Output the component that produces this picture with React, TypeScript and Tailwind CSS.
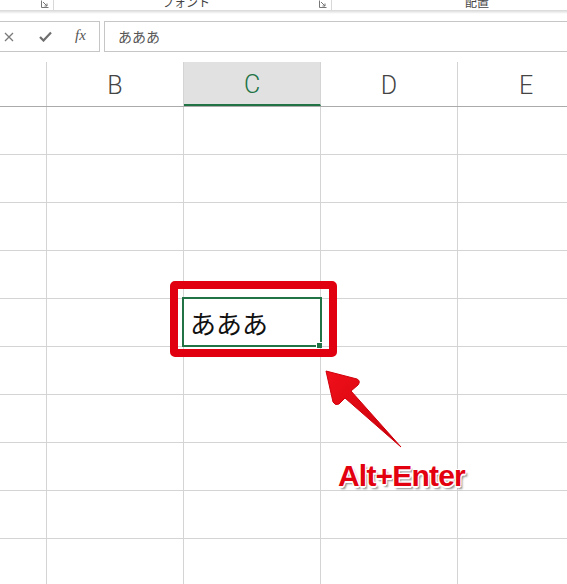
import React from "react";

const cols = [
  { key: "A", w: "w-[47px]" },
  { key: "B", w: "w-[137px]" },
  { key: "C", w: "w-[137px]" },
  { key: "D", w: "w-[137px]" },
  { key: "E", w: "w-[137px]" },
];

function Launcher() {
  return (
    <svg width="8" height="8" viewBox="0 0 8 8" className="shrink-0">
      <path d="M0.5 0.5 V7.5 H7.5" fill="none" stroke="#777" strokeWidth="1" />
      <path d="M2 2 L6 6 M6 3.5 V6 H3.5" fill="none" stroke="#777" strokeWidth="1" />
    </svg>
  );
}

export default function App() {
  const rows = Array.from({ length: 10 }, (_, i) => i + 1);
  return (
    <div className="relative w-[567px] h-[584px] overflow-hidden bg-white font-['Noto_Sans','Noto_Sans_CJK_JP',sans-serif]">
      {/* Ribbon bottom strip */}
      <div className="flex h-[10px] overflow-hidden text-[12px] leading-[12px] text-[#444] font-['Noto_Sans_CJK_JP',sans-serif]">
        <div className="w-[54px] shrink-0 flex justify-end items-start pr-[4px] border-r border-[#d8d8d8]">
          <Launcher />
        </div>
        <div className="w-[278px] shrink-0 flex justify-between items-start border-r border-[#d8d8d8] pr-[4px]">
          <span className="ml-[108px] -mt-[4px]">フォント</span>
          <Launcher />
        </div>
        <div className="flex-1 flex items-start">
          <span className="ml-[133px] -mt-[4px]">配置</span>
        </div>
      </div>
      <div className="h-[4px] bg-gradient-to-b from-[#d6d6d6] to-white" />

      {/* Formula bar */}
      <div className="mt-[7px] flex h-[31px] gap-[4px]">
        <div className="w-[100px] shrink-0 flex items-center border border-l-0 border-[#c6c6c6]">
          <svg width="10" height="10" viewBox="0 0 10 10" className="ml-[4px]">
            <path d="M1 1 L9 9 M9 1 L1 9" stroke="#7a7a7a" strokeWidth="1.3" />
          </svg>
          <svg width="13" height="11" viewBox="0 0 13 11" className="ml-[25px]">
            <path d="M1 6 L4.5 9.5 L12 1.5" fill="none" stroke="#6e6e6e" strokeWidth="2.2" />
          </svg>
          <span className="ml-[23px] -mt-[2px] text-[15px] italic text-[#555] font-['Liberation_Serif',serif]">fx</span>
        </div>
        <div className="flex-1 flex items-center pl-[13px] border border-r-0 border-[#c6c6c6] text-[14px] text-[#555] font-['Noto_Sans_CJK_JP',sans-serif]">
          あああ
        </div>
      </div>

      {/* Column headers */}
      <div className="mt-[10px] flex h-[45px] border-b border-[#ababab]">
        {cols.map((c) => (
          <div
            key={c.key}
            className={`${c.w} shrink-0 h-full flex items-center justify-center pt-[3px] border-r border-[#d4d4d4] text-[25px] font-light font-['Roboto',sans-serif] ${
              c.key === "C"
                ? "bg-[#e1e1e1] text-[#217346] border-b-2 border-b-[#217346]"
                : "text-[#444]"
            }`}
          >
            {c.key === "A" ? "" : c.key}
          </div>
        ))}
      </div>

      {/* Rows */}
      {rows.map((r) => (
        <div key={r} className="flex h-[48px]">
          {cols.map((c) => {
            const selected = r === 5 && c.key === "C";
            return (
              <div
                key={c.key}
                className={`${c.w} shrink-0 h-full border-r border-b border-[#d4d4d4] ${
                  selected ? "relative flex items-center pl-[6px]" : ""
                }`}
              >
                {selected && (
                  <>
                    <span className="text-[26px] text-[#111] font-['Noto_Sans_CJK_JP',sans-serif] leading-none">
                      あああ
                    </span>
                    <div className="absolute left-[-2px] top-[-2px] w-[140px] h-[50px] border-2 border-[#217346]" />
                    <div className="absolute right-[-2px] bottom-[-2px] w-[6px] h-[6px] bg-[#217346] border-l border-t border-white" />
                  </>
                )}
              </div>
            );
          })}
        </div>
      ))}

      {/* Red annotation box */}
      <div className="absolute left-[170px] top-[281px] w-[167px] h-[76px] border-[8px] border-[#e1000f] rounded-[5px]" />

      {/* Arrow */}
      <svg className="absolute left-0 top-0 pointer-events-none" width="567" height="584" viewBox="0 0 567 584">
        <defs>
          <linearGradient id="ag" x1="0" y1="0" x2="1" y2="1">
            <stop offset="0" stopColor="#f0101a" />
            <stop offset="1" stopColor="#c8000a" />
          </linearGradient>
        </defs>
        <path
          d="M326 371 L357 379 Q361 381 358 385 L351 391 L401 447 L345 398 L339 404 Q335 406 333 402 Z"
          fill="url(#ag)"
          stroke="#d0000c"
          strokeWidth="1"
          strokeLinejoin="round"
        />
      </svg>

      {/* Label */}
      <div className="absolute left-[338px] top-[461px] text-[30px] leading-none font-bold tracking-[-0.8px] text-[#e3000f] font-['Liberation_Sans',sans-serif] [text-shadow:1px_1px_0_#fff,-1px_-1px_0_#fff,1px_-1px_0_#fff,-1px_1px_0_#fff,0_2px_0_#fff,2px_3px_2px_rgba(0,0,0,0.45)]">
        Alt+Enter
      </div>
    </div>
  );
}
